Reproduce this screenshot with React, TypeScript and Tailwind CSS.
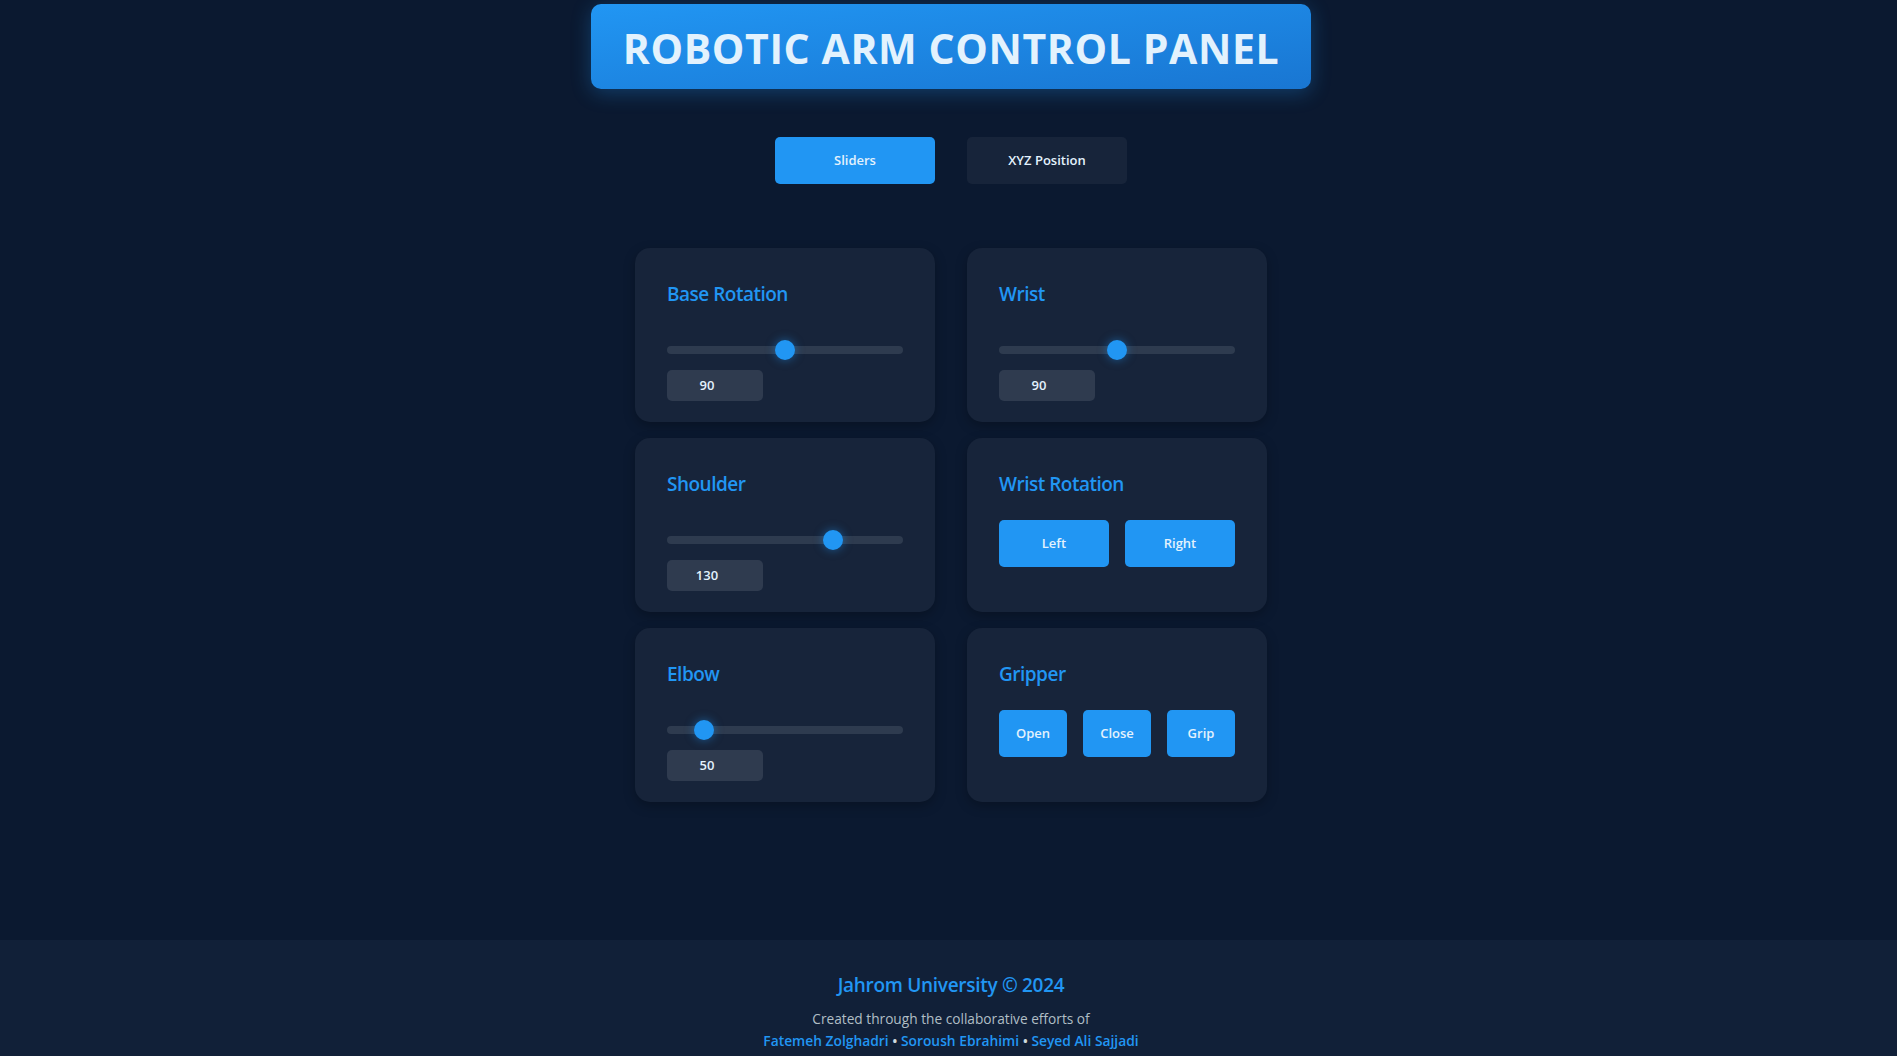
import React from "react";

type Joint = { name: string; value: number; min: number; max: number };

const sliders: Joint[] = [
  { name: "Base Rotation", value: 90, min: 0, max: 180 },
  { name: "Shoulder", value: 130, min: 0, max: 180 },
  { name: "Elbow", value: 50, min: 40, max: 120 },
];

const btn = "h-[47px] flex-1 rounded-[5px] bg-[#2196f3] text-[13px] font-semibold text-[#e3f2fd]";

const SliderCard = ({ joint }: { joint: Joint }) => (
  <div className="flex h-[174px] flex-col rounded-[15px] bg-[#17243a] px-8 pb-[21px] pt-[33px] shadow-[0_4px_12px_rgba(0,0,0,0.25)]">
    <h3 className="text-[19px] font-semibold leading-[27px] tracking-[-0.5px] text-[#2196f3]">
      {joint.name}
    </h3>
    <div className="mt-[32px] flex h-5 items-center">
      <input
        type="range"
        min={joint.min}
        max={joint.max}
        defaultValue={joint.value}
        className="h-2 w-full cursor-pointer appearance-none rounded-full bg-[#2e3b4f] outline-none [&::-webkit-slider-thumb]:h-5 [&::-webkit-slider-thumb]:w-5 [&::-webkit-slider-thumb]:appearance-none [&::-webkit-slider-thumb]:rounded-full [&::-webkit-slider-thumb]:bg-[#2196f3] [&::-webkit-slider-thumb]:shadow-[0_0_10px_rgba(33,150,243,0.5)] [&::-moz-range-thumb]:h-5 [&::-moz-range-thumb]:w-5 [&::-moz-range-thumb]:rounded-full [&::-moz-range-thumb]:border-0 [&::-moz-range-thumb]:bg-[#2196f3]"
      />
    </div>
    <div className="mt-[10px] flex h-[31px] w-[96px] items-center justify-center rounded-[5px] bg-[#2f3b4f] pr-4 text-[13px] font-semibold text-[#e3f2fd]">
      {joint.value}
    </div>
  </div>
);

const ButtonCard = ({ title, labels }: { title: string; labels: string[] }) => (
  <div className="flex h-[174px] flex-col rounded-[15px] bg-[#17243a] px-8 pt-[33px] shadow-[0_4px_12px_rgba(0,0,0,0.25)]">
    <h3 className="text-[19px] font-semibold leading-[27px] tracking-[-0.5px] text-[#2196f3]">
      {title}
    </h3>
    <div className="mt-[22px] flex gap-4">
      {labels.map((l) => (
        <button key={l} className={btn}>
          {l}
        </button>
      ))}
    </div>
  </div>
);

export default function App() {
  return (
    <div className="min-h-screen bg-[#0b1930] font-['Open_Sans',sans-serif]">
      <main className="flex flex-col items-center pl-[5px] pt-1">
        {/* Title */}
        <header className="flex h-[85px] w-[720px] items-center justify-center rounded-[10px] bg-gradient-to-br from-[#2196f3] to-[#1976d2] pt-1 shadow-[0_4px_20px_rgba(33,150,243,0.3)]">
          <h1 className="text-[41px] font-bold tracking-[0.6px] text-[#e3f2fd]">
            ROBOTIC ARM CONTROL PANEL
          </h1>
        </header>

        {/* Tabs */}
        <nav className="mt-[48px] flex gap-8 text-[13px] font-semibold text-[#e3f2fd]">
          <button className="h-[47px] w-[160px] rounded-[5px] bg-[#2196f3]">Sliders</button>
          <button className="h-[47px] w-[160px] rounded-[5px] bg-[#17243a]">XYZ Position</button>
        </nav>

        {/* Controls */}
        <section className="mt-16 grid grid-cols-[300px_300px] gap-x-8 gap-y-4">
          <SliderCard joint={sliders[0]} />
          <SliderCard joint={{ name: "Wrist", value: 90, min: 0, max: 180 }} />
          <SliderCard joint={sliders[1]} />
          <ButtonCard title="Wrist Rotation" labels={["Left", "Right"]} />
          <SliderCard joint={sliders[2]} />
          <ButtonCard title="Gripper" labels={["Open", "Close", "Grip"]} />
        </section>
      </main>

      {/* Footer */}
      <footer className="mt-[138px] bg-[#112038] pb-8 pl-[5px] pt-8 text-center">
        <p className="text-[19px] font-semibold leading-[27px] tracking-[-0.3px] text-[#2196f3]">
          Jahrom University © 2024
        </p>
        <p className="mt-[9px] text-[13.7px] leading-[22px] text-[#b0bec5]">
          Created through the collaborative efforts of
        </p>
        <p className="text-[13.8px] font-semibold leading-[22px] text-[#cfd8dc]">
          <span className="text-[#2196f3]">Fatemeh Zolghadri</span> •{" "}
          <span className="text-[#2196f3]">Soroush Ebrahimi</span> •{" "}
          <span className="text-[#2196f3]">Seyed Ali Sajjadi</span>
        </p>
      </footer>
    </div>
  );
}
